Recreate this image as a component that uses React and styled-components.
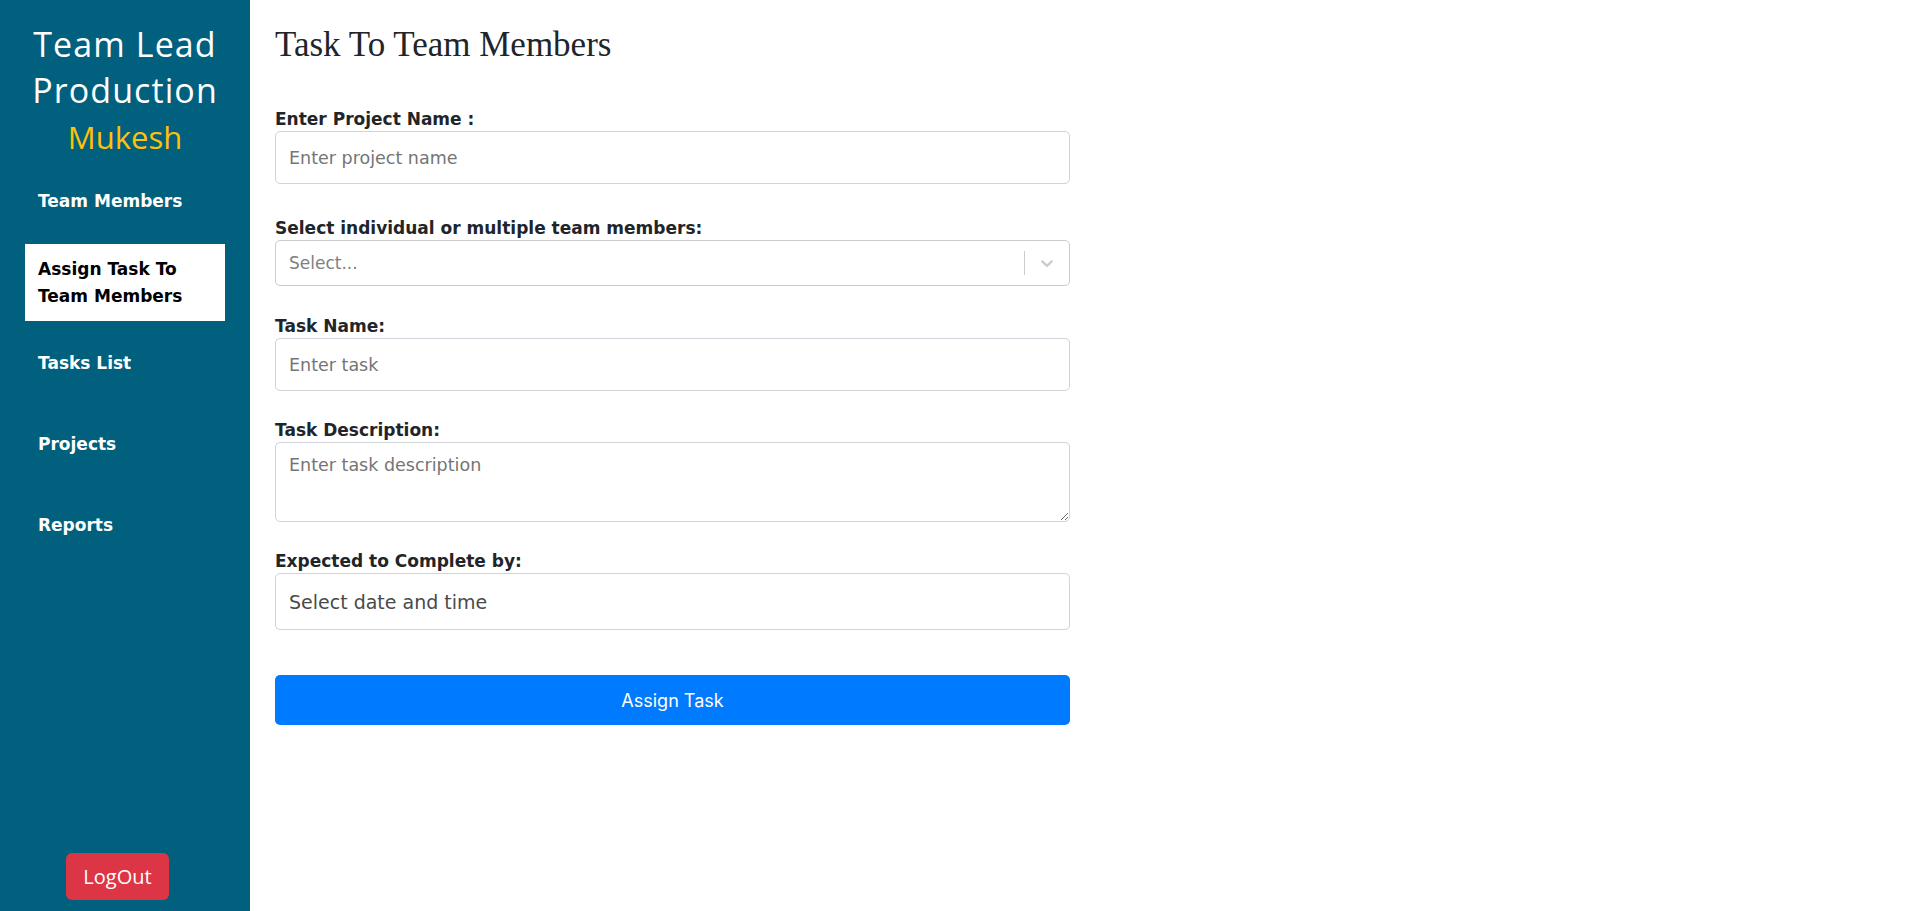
import React from "react";
import styled, { createGlobalStyle } from "styled-components";

const GlobalStyle = createGlobalStyle`
  * { box-sizing: border-box; }
  body {
    margin: 0;
    font-family: "DejaVu Sans", "Inter", sans-serif;
    background: #fff;
  }
`;

const Layout = styled.div`
  display: flex;
  height: 911px;
`;

const Sidebar = styled.aside`
  width: 250px;
  flex-shrink: 0;
  background: #00607e;
  display: flex;
  flex-direction: column;
  padding-top: 21px;
`;

const Brand = styled.h2`
  margin: 0;
  color: #fff;
  text-align: center;
  font-family: "Open Sans", sans-serif;
  font-weight: 500;
  font-size: 34px;
  line-height: 46px;
  letter-spacing: 1.1px;
`;

const UserName = styled.div`
  color: #ffc107;
  text-align: center;
  font-family: "Open Sans", sans-serif;
  font-weight: 500;
  font-size: 31px;
  line-height: 36px;
  margin-top: 6px;
`;

const Nav = styled.nav`
  display: flex;
  flex-direction: column;
  gap: 4px;
  padding: 0 25px;
  margin-top: 8px;
`;

const NavItem = styled.a`
  display: flex;
  align-items: center;
  min-height: 77px;
  padding: 0 13px;
  font-weight: 700;
  font-size: 17px;
  line-height: 27px;
  color: ${(p) => (p.$active ? "#000" : "#fff")};
  background: ${(p) => (p.$active ? "#fff" : "transparent")};
  text-decoration: none;
`;

const LogoutButton = styled.button`
  margin: auto 0 11px 66px;
  width: 103px;
  height: 47px;
  border: none;
  border-radius: 6px;
  background: #dc3545;
  color: #fff;
  font-family: "Open Sans", sans-serif;
  font-size: 20px;
`;

const Main = styled.main`
  flex: 1;
  padding: 24px 25px;
`;

const Heading = styled.h1`
  margin: 0 0 41px;
  font-family: "Liberation Serif", serif;
  font-weight: 400;
  font-size: 35px;
  line-height: 42px;
  color: #212529;
`;

const Form = styled.form`
  width: 795px;
  display: flex;
  flex-direction: column;
`;

const Group = styled.div`
  display: flex;
  flex-direction: column;
  margin-bottom: ${(p) => p.$gap || 27}px;
`;

const Label = styled.label`
  font-weight: 700;
  font-size: 17px;
  line-height: 24px;
  color: #212529;
`;

const Field = styled.input`
  height: ${(p) => p.$h || 53}px;
  border: 1px solid #ced4da;
  border-radius: 5px;
  padding: 0 13px;
  font-family: inherit;
  font-size: 17.5px;
  color: #495057;
  &::placeholder {
    color: #757575;
  }
`;

const DateField = styled(Field)`
  font-size: 19px;
  &::placeholder {
    color: #4a4a4a;
  }
`;

const TextArea = styled.textarea`
  height: 80px;
  border: 1px solid #ced4da;
  border-radius: 5px;
  padding: 12px 13px;
  font-family: inherit;
  font-size: 17.5px;
  resize: vertical;
  &::placeholder {
    color: #757575;
  }
`;

const SelectBox = styled.div`
  height: 46px;
  border: 1px solid #ccc;
  border-radius: 5px;
  display: flex;
  align-items: center;
  padding-left: 13px;
`;

const SelectPlaceholder = styled.span`
  flex: 1;
  font-size: 17px;
  color: #808080;
`;

const Separator = styled.span`
  width: 1px;
  height: 24px;
  background: #ccc;
`;

const Indicator = styled.span`
  width: 44px;
  display: flex;
  justify-content: center;
  color: #ccc;
`;

const SubmitButton = styled.button`
  height: 50px;
  border: none;
  border-radius: 5px;
  background: #007bff;
  color: #fff;
  font-family: "Inter", sans-serif;
  font-size: 18px;
`;

const Chevron = () => (
  <svg width="20" height="20" viewBox="0 0 20 20" fill="currentColor">
    <path d="M4.516 7.548c0.436-0.446 1.043-0.481 1.576 0l3.908 3.747 3.908-3.747c0.533-0.481 1.141-0.446 1.574 0 0.436 0.445 0.408 1.197 0 1.615-0.406 0.418-4.695 4.502-4.695 4.502-0.217 0.223-0.502 0.335-0.787 0.335s-0.57-0.112-0.789-0.335c0 0-4.287-4.084-4.695-4.502s-0.436-1.170 0-1.615z" />
  </svg>
);

const navLinks = [
  { label: "Team Members" },
  { label: "Assign Task To Team Members", active: true },
  { label: "Tasks List" },
  { label: "Projects" },
  { label: "Reports" },
];

export default function App() {
  return (
    <>
      <GlobalStyle />
      <Layout>
        <Sidebar>
          <Brand>
            Team Lead
            <br />
            Production
          </Brand>
          <UserName>Mukesh</UserName>
          <Nav>
            {navLinks.map((l) => (
              <NavItem key={l.label} href="#" $active={l.active}>
                {l.active ? (
                  <span>
                    Assign Task To
                    <br />
                    Team Members
                  </span>
                ) : (
                  l.label
                )}
              </NavItem>
            ))}
          </Nav>
          <LogoutButton>LogOut</LogoutButton>
        </Sidebar>
        <Main>
          <Heading>Task To Team Members</Heading>
          <Form onSubmit={(e) => e.preventDefault()}>
            <Group $gap={32}>
              <Label>Enter Project Name :</Label>
              <Field placeholder="Enter project name" />
            </Group>
            <Group $gap={28}>
              <Label>Select individual or multiple team members:</Label>
              <SelectBox>
                <SelectPlaceholder>Select...</SelectPlaceholder>
                <Separator />
                <Indicator>
                  <Chevron />
                </Indicator>
              </SelectBox>
            </Group>
            <Group>
              <Label>Task Name:</Label>
              <Field placeholder="Enter task" />
            </Group>
            <Group>
              <Label>Task Description:</Label>
              <TextArea placeholder="Enter task description" />
            </Group>
            <Group $gap={45}>
              <Label>Expected to Complete by:</Label>
              <DateField $h={57} placeholder="Select date and time" />
            </Group>
            <SubmitButton>Assign Task</SubmitButton>
          </Form>
        </Main>
      </Layout>
    </>
  );
}
